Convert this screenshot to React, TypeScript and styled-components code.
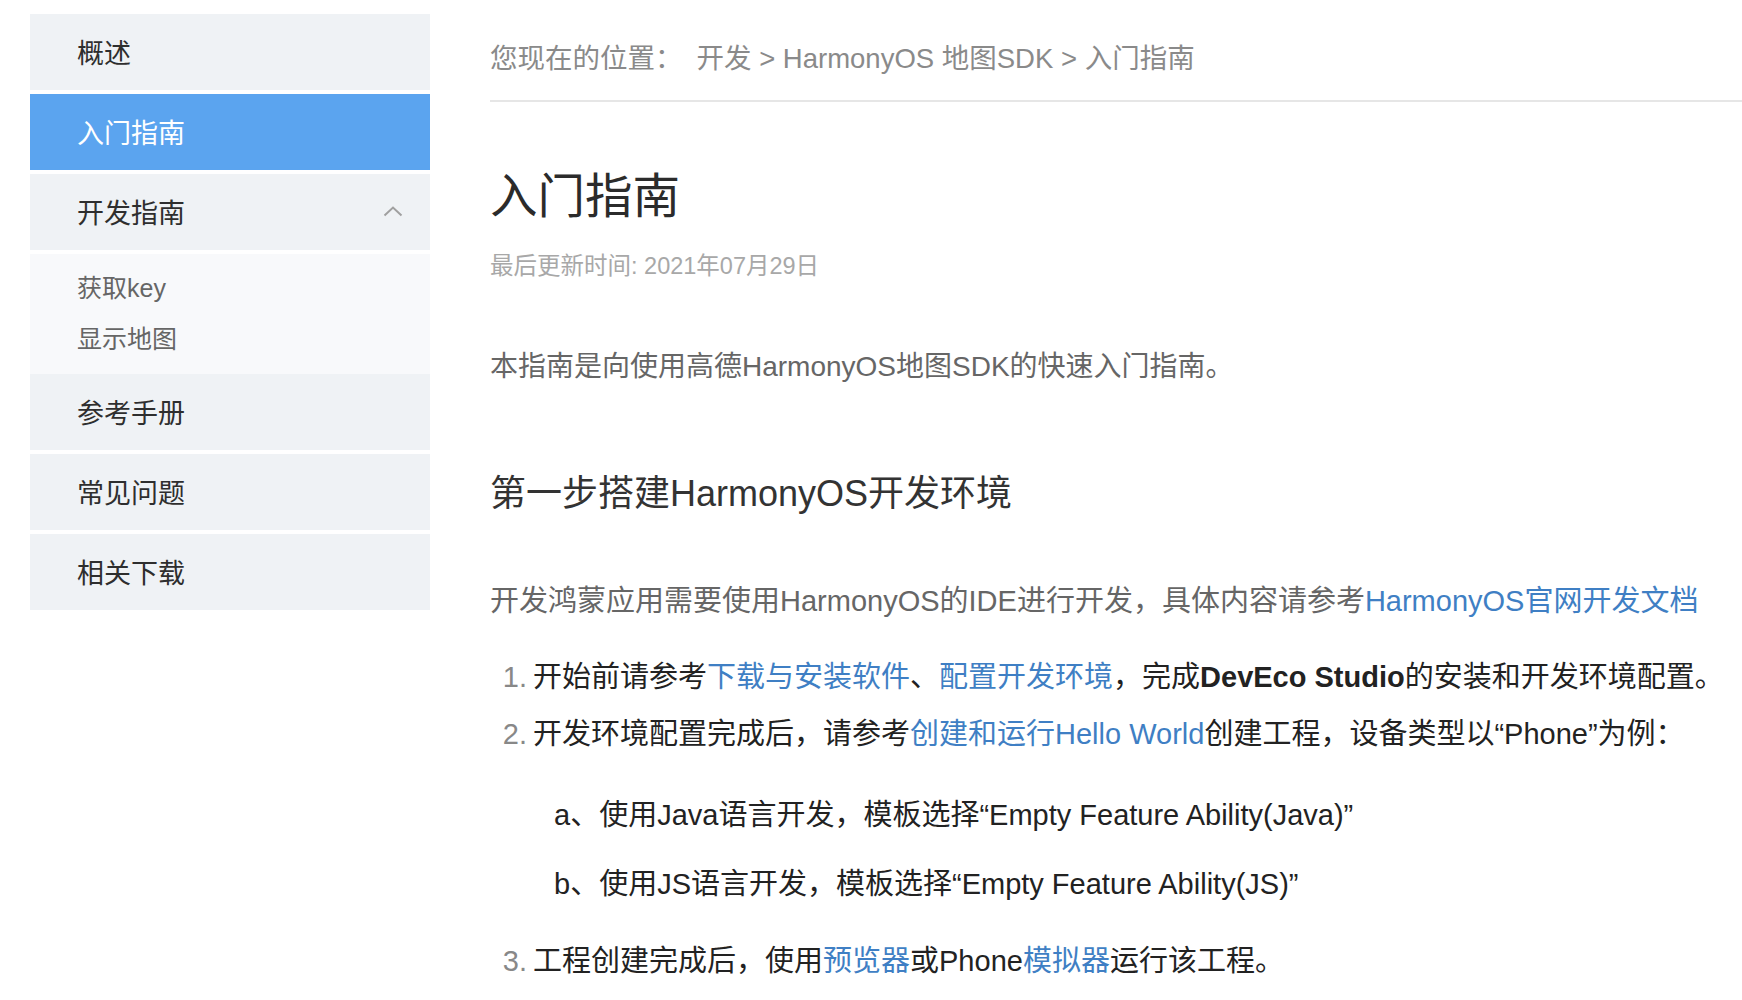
import React from 'react'
import styled, { createGlobalStyle } from 'styled-components'

const GlobalStyle = createGlobalStyle`
  body {
    margin: 0;
    background: #ffffff;
    font-family: "Liberation Sans", "Noto Sans CJK SC", sans-serif;
    color: #333333;
  }
`

const Page = styled.div`
  display: flex;
  align-items: flex-start;
  gap: 60px;
  padding-left: 30px;
  width: 1742px;
  box-sizing: border-box;
  overflow: hidden;
`

const Sidebar = styled.nav`
  flex: 0 0 400px;
  margin-top: 14px;
  display: flex;
  flex-direction: column;
`

const NavItem = styled.div<{ active?: boolean; last?: boolean }>`
  height: 76px;
  box-sizing: border-box;
  display: flex;
  align-items: center;
  justify-content: space-between;
  padding: 0 27px 2px 47px;
  margin-bottom: ${({ last }) => (last ? '0' : '4px')};
  font-size: 27px;
  background: ${({ active }) => (active ? '#5ba4ef' : '#eff2f5')};
  color: ${({ active }) => (active ? '#ffffff' : '#2e2e2e')};
`

const SubMenu = styled.div`
  background: #f8f9fb;
  padding: 9px 0;
`

const SubItem = styled.div`
  padding-left: 47px;
  line-height: 51px;
  font-size: 25px;
  color: #666666;
`

const Main = styled.main`
  flex: 1;
  min-width: 0;
`

const Breadcrumb = styled.div`
  padding: 41px 0 23px;
  line-height: 36px;
  font-size: 27.5px;
  color: #8a8a8a;
  border-bottom: 2px solid #e6e6e6;
  white-space: nowrap;

  .label {
    margin-right: 14px;
  }
`

const Title = styled.h1`
  margin: 65px 0 0;
  font-size: 47.5px;
  line-height: 60px;
  font-weight: normal;
  color: #2b2b2b;
`

const Updated = styled.div`
  margin-top: 23px;
  font-size: 23.5px;
  line-height: 32px;
  color: #a8a8a8;
`

const Intro = styled.p`
  margin: 65px 0 0;
  font-size: 28px;
  line-height: 40px;
  color: #666666;
`

const SectionTitle = styled.h2`
  margin: 83px 0 0;
  font-size: 36px;
  line-height: 48px;
  font-weight: normal;
  color: #333333;
`

const Para = styled.p`
  margin: 63px 0 0;
  font-size: 29px;
  line-height: 40px;
  color: #666666;
  white-space: nowrap;
`

const Steps = styled.ol`
  margin: 28px 0 0;
  padding: 0;
  list-style: none;
`

const Step = styled.li<{ gapTop?: number }>`
  display: grid;
  grid-template-columns: 43px 1fr;
  margin-top: ${({ gapTop }) => gapTop || 0}px;
  font-size: 29px;
  line-height: 57px;
  color: #222222;
  white-space: nowrap;
`

const Marker = styled.span`
  text-align: right;
  padding-right: 6px;
  color: #888888;
`

const SubList = styled.div`
  display: flex;
  flex-direction: column;
  gap: 12px;
  padding: 24px 0 0 21px;
`

const Link = styled.a`
  color: #3f7fc4;
  text-decoration: none;
`

const Strong = styled.b`
  font-weight: bold;
  color: #222222;
`

const Chevron = () => (
  <svg width="20" height="12" viewBox="0 0 20 12" fill="none">
    <polyline points="1.5,10.5 10,2.5 18.5,10.5" stroke="#a0a0a0" strokeWidth="2" />
  </svg>
)

export default function App() {
  return (
    <>
      <GlobalStyle />
      <Page>
        <Sidebar>
          <NavItem>概述</NavItem>
          <NavItem active>入门指南</NavItem>
          <NavItem>
            开发指南
            <Chevron />
          </NavItem>
          <SubMenu>
            <SubItem>获取key</SubItem>
            <SubItem>显示地图</SubItem>
          </SubMenu>
          <NavItem>参考手册</NavItem>
          <NavItem>常见问题</NavItem>
          <NavItem last>相关下载</NavItem>
        </Sidebar>

        <Main>
          <Breadcrumb>
            <span className="label">您现在的位置：</span>
            开发 &gt; HarmonyOS 地图SDK &gt; 入门指南
          </Breadcrumb>

          <Title>入门指南</Title>
          <Updated>最后更新时间: 2021年07月29日</Updated>

          <Intro>本指南是向使用高德HarmonyOS地图SDK的快速入门指南。</Intro>

          <SectionTitle>第一步搭建HarmonyOS开发环境</SectionTitle>

          <Para>
            开发鸿蒙应用需要使用HarmonyOS的IDE进行开发，具体内容请参考
            <Link href="#">HarmonyOS官网开发文档</Link>
          </Para>

          <Steps>
            <Step>
              <Marker>1.</Marker>
              <span>
                开始前请参考<Link href="#">下载与安装软件</Link>、
                <Link href="#">配置开发环境</Link>，完成<Strong>DevEco Studio</Strong>
                的安装和开发环境配置。
              </span>
            </Step>
            <Step>
              <Marker>2.</Marker>
              <div>
                开发环境配置完成后，请参考<Link href="#">创建和运行Hello World</Link>
                创建工程，设备类型以“Phone”为例：
                <SubList>
                  <div>a、使用Java语言开发，模板选择“Empty Feature Ability(Java)”</div>
                  <div>b、使用JS语言开发，模板选择“Empty Feature Ability(JS)”</div>
                </SubList>
              </div>
            </Step>
            <Step gapTop={20}>
              <Marker>3.</Marker>
              <span>
                工程创建完成后，使用<Link href="#">预览器</Link>或Phone
                <Link href="#">模拟器</Link>运行该工程。
              </span>
            </Step>
          </Steps>
        </Main>
      </Page>
    </>
  )
}
